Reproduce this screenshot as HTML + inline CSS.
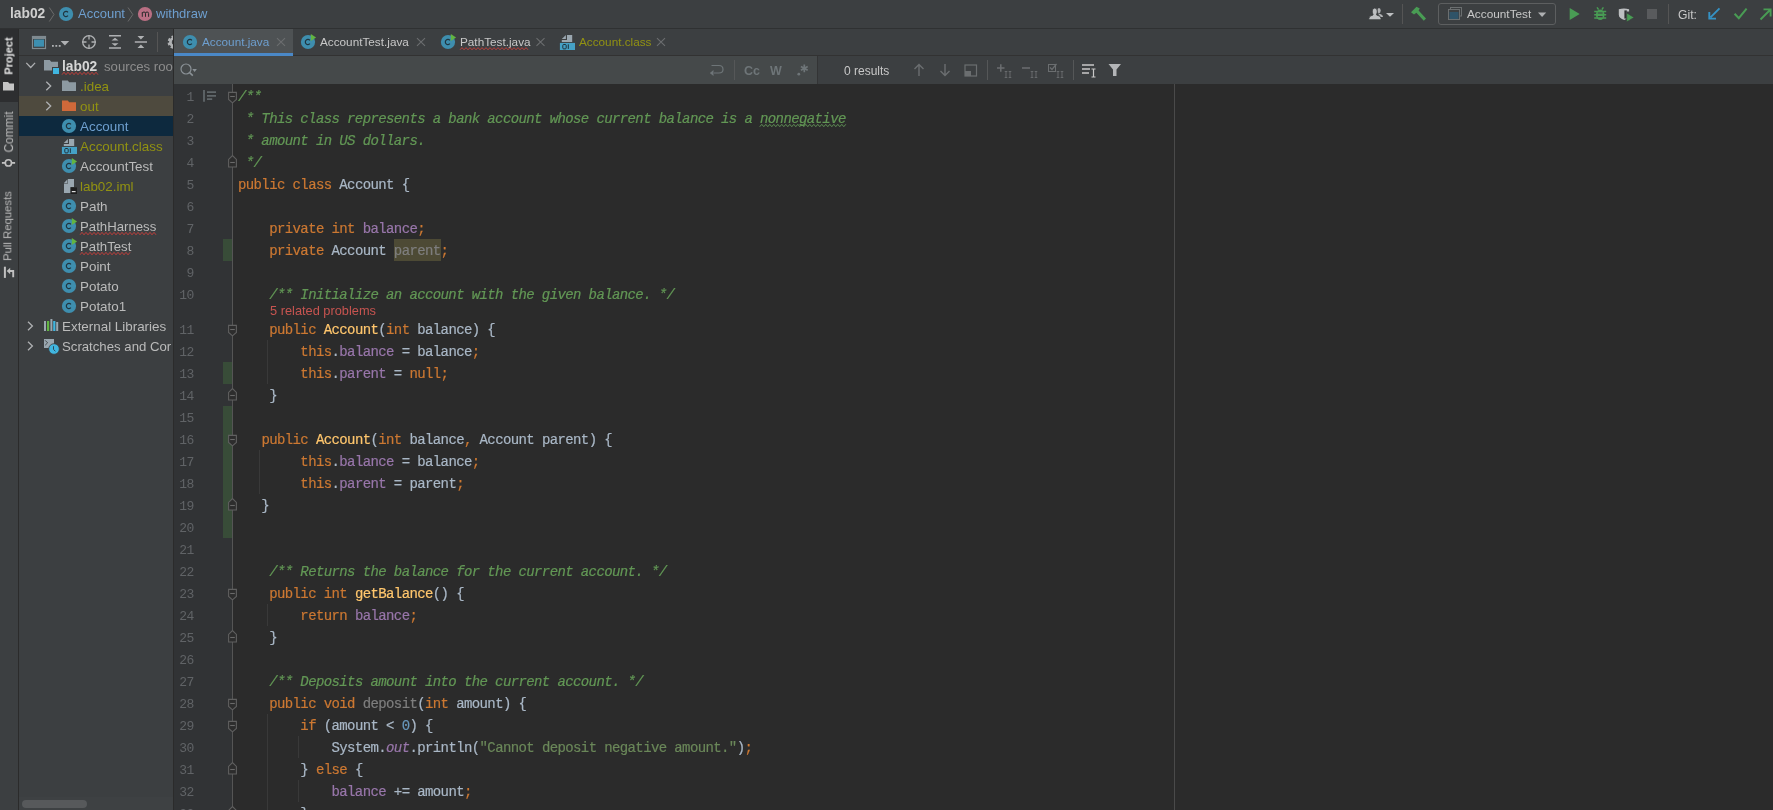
<!DOCTYPE html><html><head><meta charset="utf-8"><style>
*{margin:0;padding:0;box-sizing:border-box}
html,body{width:1773px;height:810px;overflow:hidden;background:#3c3f41;font-family:"Liberation Sans",sans-serif;color:#bbbbbb;position:relative}
.a{position:absolute}
.t{position:absolute;white-space:pre}
.cl{position:absolute;left:238px;height:22px;line-height:22px;font-family:"Liberation Mono",monospace;font-size:14px;letter-spacing:-0.61px;color:#a9b7c6;padding-top:1px;-webkit-text-stroke:0.2px;white-space:pre}
.ln{position:absolute;left:173px;width:21px;height:22px;line-height:22px;padding-top:2px;text-align:right;font-family:"Liberation Mono",monospace;font-size:13px;letter-spacing:-0.4px;color:#606366;white-space:pre}
.k{color:#cc7832}.c{color:#629755;font-style:italic}.f{color:#9876aa}.s{color:#6a8759}.n{color:#6897bb}.m{color:#ffc66d}.u{color:#7e7e7e}.fi{color:#9876aa;font-style:italic}
.tr{position:absolute;height:20px;line-height:20px;font-size:13.2px;white-space:pre;color:#bbbbbb}
.ol{color:#929212}
svg{position:absolute;overflow:visible}
.t,.tr,.cl,.ln{will-change:transform}
</style></head><body>
<div class="a" style="left:0px;top:0px;width:1773px;height:28px;background:#3c3f41;"></div>
<div class="a" style="left:0px;top:28px;width:1773px;height:1px;background:#2f3132;"></div>
<div class="a" style="left:0px;top:29px;width:19px;height:781px;background:#3c3f41;"></div>
<div class="a" style="left:0px;top:29px;width:18px;height:69px;background:#2f3132;"></div>
<div class="a" style="left:18px;top:29px;width:1px;height:781px;background:#2b2b2b;"></div>
<div class="a" style="left:19px;top:29px;width:154px;height:781px;background:#3c3f41;"></div>
<div class="a" style="left:173px;top:29px;width:1px;height:781px;background:#2b2b2b;"></div>
<div class="a" style="left:174px;top:29px;width:1599px;height:27px;background:#3c3f41;"></div>
<div class="a" style="left:174px;top:29px;width:119px;height:24px;background:#4e5254;"></div>
<div class="a" style="left:174px;top:53px;width:119px;height:3px;background:#4a88c7;"></div>
<div class="a" style="left:293px;top:55px;width:1480px;height:1px;background:#323232;"></div>
<div class="a" style="left:174px;top:56px;width:643px;height:28px;background:#45494a;"></div>
<div class="a" style="left:817px;top:56px;width:1px;height:28px;background:#333435;"></div>
<div class="a" style="left:818px;top:56px;width:955px;height:28px;background:#3c3f41;"></div>
<div class="a" style="left:174px;top:84px;width:1599px;height:726px;background:#2b2b2b;"></div>
<div class="a" style="left:174px;top:84px;width:58px;height:726px;background:#313335;"></div>
<div class="a" style="left:1174px;top:84px;width:1px;height:726px;background:#4a4a4a;"></div>
<div class="a" style="left:394px;top:239px;width:47px;height:22px;background:#4d4a35;"></div>
<div class="a" style="left:223px;top:239px;width:9px;height:22px;background:#384c38;"></div>
<div class="a" style="left:223px;top:362px;width:9px;height:22px;background:#384c38;"></div>
<div class="a" style="left:223px;top:406px;width:9px;height:132px;background:#384c38;"></div>
<div class="a" style="left:232px;top:84px;width:1px;height:726px;background:#555555;"></div>
<div class="a" style="left:267px;top:340px;width:1px;height:44px;background:#393939;"></div>
<div class="a" style="left:259px;top:450px;width:1px;height:44px;background:#393939;"></div>
<div class="a" style="left:267px;top:604px;width:1px;height:22px;background:#393939;"></div>
<div class="a" style="left:267px;top:714px;width:1px;height:110px;background:#393939;"></div>
<div class="a" style="left:298px;top:736px;width:1px;height:22px;background:#393939;"></div>
<div class="a" style="left:298px;top:780px;width:1px;height:22px;background:#393939;"></div>
<div class="ln" style="top:85px">1</div>
<div class="cl" style="top:85px"><span class="c">/**</span></div>
<div class="ln" style="top:107px">2</div>
<div class="cl" style="top:107px"><span class="c"> * This class represents a bank account whose current balance is a </span><span class="c">nonnegative</span></div>
<div class="ln" style="top:129px">3</div>
<div class="cl" style="top:129px"><span class="c"> * amount in US dollars.</span></div>
<div class="ln" style="top:151px">4</div>
<div class="cl" style="top:151px"><span class="c"> */</span></div>
<div class="ln" style="top:173px">5</div>
<div class="cl" style="top:173px"><span class="k">public </span><span class="k">class </span>Account {</div>
<div class="ln" style="top:195px">6</div>
<div class="cl" style="top:195px"></div>
<div class="ln" style="top:217px">7</div>
<div class="cl" style="top:217px">    <span class="k">private </span><span class="k">int </span><span class="f">balance</span><span class="k">;</span></div>
<div class="ln" style="top:239px">8</div>
<div class="cl" style="top:239px">    <span class="k">private </span>Account <span class="u">parent</span><span class="k">;</span></div>
<div class="ln" style="top:261px">9</div>
<div class="cl" style="top:261px"></div>
<div class="ln" style="top:283px">10</div>
<div class="cl" style="top:283px">    <span class="c">/** Initialize an account with the given balance. */</span></div>
<div class="ln" style="top:318px">11</div>
<div class="cl" style="top:318px">    <span class="k">public </span><span class="m">Account</span>(<span class="k">int </span>balance) {</div>
<div class="ln" style="top:340px">12</div>
<div class="cl" style="top:340px">        <span class="k">this</span>.<span class="f">balance</span> = balance<span class="k">;</span></div>
<div class="ln" style="top:362px">13</div>
<div class="cl" style="top:362px">        <span class="k">this</span>.<span class="f">parent</span> = <span class="k">null;</span></div>
<div class="ln" style="top:384px">14</div>
<div class="cl" style="top:384px">    }</div>
<div class="ln" style="top:406px">15</div>
<div class="cl" style="top:406px"></div>
<div class="ln" style="top:428px">16</div>
<div class="cl" style="top:428px">   <span class="k">public </span><span class="m">Account</span>(<span class="k">int </span>balance<span class="k">, </span>Account parent) {</div>
<div class="ln" style="top:450px">17</div>
<div class="cl" style="top:450px">        <span class="k">this</span>.<span class="f">balance</span> = balance<span class="k">;</span></div>
<div class="ln" style="top:472px">18</div>
<div class="cl" style="top:472px">        <span class="k">this</span>.<span class="f">parent</span> = parent<span class="k">;</span></div>
<div class="ln" style="top:494px">19</div>
<div class="cl" style="top:494px">   }</div>
<div class="ln" style="top:516px">20</div>
<div class="cl" style="top:516px"></div>
<div class="ln" style="top:538px">21</div>
<div class="cl" style="top:538px"></div>
<div class="ln" style="top:560px">22</div>
<div class="cl" style="top:560px">    <span class="c">/** Returns the balance for the current account. */</span></div>
<div class="ln" style="top:582px">23</div>
<div class="cl" style="top:582px">    <span class="k">public </span><span class="k">int </span><span class="m">getBalance</span>() {</div>
<div class="ln" style="top:604px">24</div>
<div class="cl" style="top:604px">        <span class="k">return </span><span class="f">balance</span><span class="k">;</span></div>
<div class="ln" style="top:626px">25</div>
<div class="cl" style="top:626px">    }</div>
<div class="ln" style="top:648px">26</div>
<div class="cl" style="top:648px"></div>
<div class="ln" style="top:670px">27</div>
<div class="cl" style="top:670px">    <span class="c">/** Deposits amount into the current account. */</span></div>
<div class="ln" style="top:692px">28</div>
<div class="cl" style="top:692px">    <span class="k">public </span><span class="k">void </span><span class="u">deposit</span>(<span class="k">int </span>amount) {</div>
<div class="ln" style="top:714px">29</div>
<div class="cl" style="top:714px">        <span class="k">if </span>(amount &lt; <span class="n">0</span>) {</div>
<div class="ln" style="top:736px">30</div>
<div class="cl" style="top:736px">            System.<span class="fi">out</span>.println(<span class="s">&quot;Cannot deposit negative amount.&quot;</span>)<span class="k">;</span></div>
<div class="ln" style="top:758px">31</div>
<div class="cl" style="top:758px">        } <span class="k">else </span>{</div>
<div class="ln" style="top:780px">32</div>
<div class="cl" style="top:780px">            <span class="f">balance</span> += amount<span class="k">;</span></div>
<div class="ln" style="top:802px">33</div>
<div class="cl" style="top:802px">        }</div>
<div class="t" style="left:270px;top:303px;font-size:12.8px;line-height:16px;color:#c75450">5 related problems</div>
<svg style="left:0;top:0" width="1" height="1"><path d="M228.6 92.4 H236.4 V99.4 L232.5 102.8 L228.6 99.4 Z" fill="#2d2d2d" stroke="#606060" stroke-width="1.1"/><path d="M230.2 96.5 H234.8" stroke="#6a6a6a" stroke-width="1.1"/></svg>
<svg style="left:0;top:0" width="1" height="1"><path d="M228.6 167.0 H236.4 V159.4 L232.5 155.6 L228.6 159.4 Z" fill="#2d2d2d" stroke="#606060" stroke-width="1.1"/><path d="M230.2 162.5 H234.8" stroke="#6a6a6a" stroke-width="1.1"/></svg>
<svg style="left:0;top:0" width="1" height="1"><path d="M228.6 325.4 H236.4 V332.4 L232.5 335.8 L228.6 332.4 Z" fill="#2d2d2d" stroke="#606060" stroke-width="1.1"/><path d="M230.2 329.5 H234.8" stroke="#6a6a6a" stroke-width="1.1"/></svg>
<svg style="left:0;top:0" width="1" height="1"><path d="M228.6 400.0 H236.4 V392.4 L232.5 388.6 L228.6 392.4 Z" fill="#2d2d2d" stroke="#606060" stroke-width="1.1"/><path d="M230.2 395.5 H234.8" stroke="#6a6a6a" stroke-width="1.1"/></svg>
<svg style="left:0;top:0" width="1" height="1"><path d="M228.6 435.4 H236.4 V442.4 L232.5 445.8 L228.6 442.4 Z" fill="#2d2d2d" stroke="#606060" stroke-width="1.1"/><path d="M230.2 439.5 H234.8" stroke="#6a6a6a" stroke-width="1.1"/></svg>
<svg style="left:0;top:0" width="1" height="1"><path d="M228.6 510.0 H236.4 V502.4 L232.5 498.6 L228.6 502.4 Z" fill="#2d2d2d" stroke="#606060" stroke-width="1.1"/><path d="M230.2 505.5 H234.8" stroke="#6a6a6a" stroke-width="1.1"/></svg>
<svg style="left:0;top:0" width="1" height="1"><path d="M228.6 589.4 H236.4 V596.4 L232.5 599.8 L228.6 596.4 Z" fill="#2d2d2d" stroke="#606060" stroke-width="1.1"/><path d="M230.2 593.5 H234.8" stroke="#6a6a6a" stroke-width="1.1"/></svg>
<svg style="left:0;top:0" width="1" height="1"><path d="M228.6 642.0 H236.4 V634.4 L232.5 630.6 L228.6 634.4 Z" fill="#2d2d2d" stroke="#606060" stroke-width="1.1"/><path d="M230.2 637.5 H234.8" stroke="#6a6a6a" stroke-width="1.1"/></svg>
<svg style="left:0;top:0" width="1" height="1"><path d="M228.6 699.4 H236.4 V706.4 L232.5 709.8 L228.6 706.4 Z" fill="#2d2d2d" stroke="#606060" stroke-width="1.1"/><path d="M230.2 703.5 H234.8" stroke="#6a6a6a" stroke-width="1.1"/></svg>
<svg style="left:0;top:0" width="1" height="1"><path d="M228.6 721.4 H236.4 V728.4 L232.5 731.8 L228.6 728.4 Z" fill="#2d2d2d" stroke="#606060" stroke-width="1.1"/><path d="M230.2 725.5 H234.8" stroke="#6a6a6a" stroke-width="1.1"/></svg>
<svg style="left:0;top:0" width="1" height="1"><path d="M228.6 774.0 H236.4 V766.4 L232.5 762.6 L228.6 766.4 Z" fill="#2d2d2d" stroke="#606060" stroke-width="1.1"/><path d="M230.2 769.5 H234.8" stroke="#6a6a6a" stroke-width="1.1"/></svg>
<svg style="left:0;top:0" width="1" height="1"><path d="M228.6 818.0 H236.4 V810.4 L232.5 806.6 L228.6 810.4 Z" fill="#2d2d2d" stroke="#606060" stroke-width="1.1"/><path d="M230.2 813.5 H234.8" stroke="#6a6a6a" stroke-width="1.1"/></svg>
<svg style="left:0;top:0" width="1" height="1"><path d="M204 90 V101.8 M207 92.1 H216 M207 95.9 H216 M207 99.1 H212.2" stroke="#60676a" stroke-width="1.8" fill="none"/></svg>
<div class="a" style="left:0px;top:29px;width:18px;height:73px;background:#2d2e30;"></div>
<div class="t" style="left:8.6px;top:56.3px;font-size:11px;line-height:11px;color:#e6e6e6;font-weight:bold;transform:translate(-50%,-50%) rotate(-90deg)">Project</div>
<div class="t" style="left:9.8px;top:132px;font-size:11.9px;line-height:11.9px;color:#bbbbbb;font-weight:normal;transform:translate(-50%,-50%) rotate(-90deg)">Commit</div>
<div class="t" style="left:8.3px;top:225.8px;font-size:11.3px;line-height:11.3px;color:#bbbbbb;font-weight:normal;transform:translate(-50%,-50%) rotate(-90deg)">Pull Requests</div>
<svg style="left:0;top:0" width="1" height="1"><path d="M3 82 H8 L9.5 83.5 H14 V90.5 H3 Z" fill="#c5c5c5"/></svg>
<svg style="left:0;top:0" width="1" height="1"><path d="M1.9 162.9 H15.1" stroke="#c0c0c0" stroke-width="1.8"/><circle cx="8.4" cy="162.9" r="3.1" fill="#3c3f41" stroke="#c0c0c0" stroke-width="1.6"/></svg>
<svg style="left:0;top:0" width="1" height="1"><path d="M4.9 266.7 V277.9" stroke="#c0c0c0" stroke-width="2"/><path d="M6.7 271 L10.2 267.8 V274.2 Z" fill="#c0c0c0"/><path d="M9.5 271 H13.2 V277.2" fill="none" stroke="#c0c0c0" stroke-width="1.9"/></svg>
<div class="t" style="left:9.6px;top:6.11px;font-size:13.8px;line-height:15.86px;color:#cfcfcf;font-weight:bold;">lab02</div>
<svg style="left:0;top:0" width="1" height="1"><path d="M49.3 7.5 L54 14.5 L49.3 21.5" fill="none" stroke="#6b6b6b" stroke-width="1"/></svg>
<svg style="left:0;top:0" width="1" height="1"><circle cx="66.1" cy="14" r="7.1" fill="#3e8eae"/><path d="M68 12.3 A2.6 2.6 0 1 0 68 15.7" fill="none" stroke="#1f3540" stroke-width="1.2"/></svg>
<div class="t" style="left:77.5px;top:6.63px;font-size:13px;line-height:14.94px;color:#6e9fcf;font-weight:normal;">Account</div>
<svg style="left:0;top:0" width="1" height="1"><path d="M128 7.5 L132.8 14.5 L128 21.5" fill="none" stroke="#6b6b6b" stroke-width="1"/></svg>
<svg style="left:0;top:0" width="1" height="1"><circle cx="145" cy="14" r="7.1" fill="#b96f83"/><path d="M142.3 16.8 V12.2 M142.3 13.2 Q142.6 12 144 12 Q145.5 12 145.5 13.4 V16.8 M145.5 13.4 Q145.6 12 147.1 12 Q148.6 12 148.6 13.4 V16.8" fill="none" stroke="#2a2a2a" stroke-width="1"/></svg>
<div class="t" style="left:156.3px;top:6.63px;font-size:13px;line-height:14.94px;color:#6e9fcf;font-weight:normal;">withdraw</div>
<svg style="left:0;top:0" width="1" height="1"><ellipse cx="1379" cy="10.6" rx="1.7" ry="2.6" fill="#b0b2b4"/><path d="M1378 13.6 Q1383 14.4 1383 16.9 H1380.5 Z" fill="#b0b2b4"/><path d="M1368.9 19.8 V18.2 Q1369.3 15.6 1373 15 V14.2 Q1372.2 13.3 1372.2 11 Q1372.4 8 1374.8 8 Q1377.2 8 1377.3 11 Q1377.3 13.3 1376.6 14.2 V15 Q1380.6 15.6 1381 18.2 V19.8 Z" fill="#bdbfc1" stroke="#3c3f41" stroke-width="0.9"/><path d="M1386 12.9 H1394 L1390 16.8 Z" fill="#bdbfc1"/></svg>
<div class="a" style="left:1402px;top:4px;width:1px;height:20px;background:#555555;"></div>
<svg style="left:0;top:0" width="1" height="1"><path d="M1411 12.2 L1416.5 6.8 L1419.8 8.6 L1418.6 10.5 L1426 18.6 L1423.8 20.8 L1416.4 12.8 L1414 14.6 Z" fill="#499c54"/></svg>
<div class="a" style="left:1438px;top:3px;width:118px;height:22px;border:1px solid #5d5f60;border-radius:3px"></div>
<svg style="left:0;top:0" width="1" height="1"><rect x="1450.5" y="7.5" width="11" height="8.5" fill="none" stroke="#6b6f70" stroke-width="1"/><rect x="1448.5" y="9.5" width="11" height="10" fill="#3c3f41" stroke="#6b6f70" stroke-width="1"/><rect x="1449.5" y="12" width="9" height="7" fill="#2f5368"/></svg>
<div class="t" style="left:1467.2px;top:8.12px;font-size:11.8px;line-height:13.56px;color:#c8c8c8;font-weight:normal;">AccountTest</div>
<svg style="left:0;top:0" width="1" height="1"><path d="M1538 12.4 H1546.2 L1542.1 17 Z" fill="#aeb0b2"/></svg>
<svg style="left:0;top:0" width="1" height="1"><path d="M1569.7 8 L1579.7 14 L1569.7 20 Z" fill="#499c54"/></svg>
<svg style="left:0;top:0" width="1" height="1"><ellipse cx="1600.2" cy="14.8" rx="4.3" ry="5.2" fill="#499c54"/><path d="M1594.2 11.5 H1606.2 M1594.2 14.8 H1606.2 M1594.2 18.1 H1606.2 M1597 7.4 L1598.6 9.6 M1603.4 7.4 L1601.8 9.6" stroke="#499c54" stroke-width="1.5"/><path d="M1597.8 13 H1602.6 M1597.8 16.6 H1602.6" stroke="#3c3f41" stroke-width="1.1"/></svg>
<svg style="left:0;top:0" width="1" height="1"><path d="M1618.8 9.2 Q1624 7.6 1629.1 9.2 V11.6 H1626.8 V18.6 Q1625.8 19.6 1624.3 20 Q1618.8 18.4 1618.8 14.8 Z" fill="#bdbfc1"/><rect x="1624.4" y="10.4" width="2.4" height="8.2" fill="#2f3133"/><path d="M1626.7 12.9 L1634.1 17.45 L1626.7 22 Z" fill="#499c54" stroke="#3c3f41" stroke-width="0.7"/></svg>
<div class="a" style="left:1647px;top:9px;width:10px;height:10px;background:#595b5d;"></div>
<div class="a" style="left:1668px;top:4px;width:1px;height:20px;background:#555555;"></div>
<div class="t" style="left:1678.2px;top:7.96px;font-size:12.2px;line-height:14.02px;color:#c8c8c8;font-weight:normal;">Git:</div>
<svg style="left:0;top:0" width="1" height="1"><path d="M1719.5 8.3 L1710.5 17.3 M1709.3 12 V18.6 H1716" fill="none" stroke="#3592c4" stroke-width="1.9"/></svg>
<svg style="left:0;top:0" width="1" height="1"><path d="M1734.6 13.8 L1738.8 18.2 L1746.6 8.6" fill="none" stroke="#499c54" stroke-width="2"/></svg>
<svg style="left:0;top:0" width="1" height="1"><path d="M1760.5 19.5 L1770 10 M1763.5 9.4 H1770.6 V16.5" fill="none" stroke="#499c54" stroke-width="1.9"/></svg>
<svg style="left:0;top:0" width="1" height="1"><rect x="32.5" y="36.5" width="13" height="12" fill="none" stroke="#7f8a90" stroke-width="1.2"/><rect x="32" y="36" width="14" height="3" fill="#7f8a90"/><rect x="34" y="39.5" width="10" height="7.2" fill="#3d8fb0"/></svg>
<svg style="left:0;top:0" width="1" height="1"><rect x="52" y="45" width="1.8" height="1.8" fill="#afb1b3"/><rect x="55.4" y="45" width="1.8" height="1.8" fill="#afb1b3"/><rect x="58.8" y="45" width="1.8" height="1.8" fill="#afb1b3"/><path d="M60.6 41 H69.2 L64.9 45.6 Z" fill="#afb1b3"/></svg>
<svg style="left:0;top:0" width="1" height="1"><circle cx="89" cy="42" r="6.3" fill="none" stroke="#afb1b3" stroke-width="1.3"/><path d="M89 35 V39.5 M89 44.5 V49 M82 42 H86.5 M91.5 42 H96" stroke="#afb1b3" stroke-width="1.3"/></svg>
<svg style="left:0;top:0" width="1" height="1"><path d="M109 35.7 H121 M109 48 H121" stroke="#afb1b3" stroke-width="1.5"/><path d="M111.5 40.5 H118.5 L115 37.8 Z M111.5 43.2 H118.5 L115 46 Z" fill="#afb1b3"/></svg>
<svg style="left:0;top:0" width="1" height="1"><path d="M134.8 42 H147" stroke="#afb1b3" stroke-width="1.5"/><path d="M137.5 36 H144.3 L140.9 39.6 Z M137.5 48 H144.3 L140.9 44.4 Z" fill="#afb1b3"/></svg>
<div class="a" style="left:157px;top:32px;width:1px;height:20px;background:#555555;"></div>
<div class="a" style="left:160px;top:30px;width:13px;height:24px;overflow:hidden"><svg style="left:-160px;top:-30px" width="1" height="1"><circle cx="174.4" cy="42.2" r="4.0" fill="none" stroke="#afb1b3" stroke-width="2.8"/><circle cx="174.4" cy="42.2" r="5.6" fill="none" stroke="#afb1b3" stroke-width="2.4" stroke-dasharray="2.6 1.8" stroke-dashoffset="-0.9"/></svg></div>
<div class="a" style="left:19px;top:96px;width:154px;height:20px;background:#4e4a3e;"></div>
<div class="a" style="left:19px;top:116px;width:154px;height:20px;background:#0d293e;"></div>
<svg style="left:0;top:0" width="1" height="1"><path d="M26.3 62.9 L30.700000000000003 67.5 L35.1 62.9" fill="none" stroke="#aeb0b2" stroke-width="1.3"/></svg>
<svg style="left:0;top:0" width="1" height="1"><path d="M44 60.0 H49.8 L51.2 61.7 H58 V70.5 H44 Z" fill="#8d9aa2"/></svg>
<div class="a" style="left:53px;top:68px;width:6px;height:6px;background:#40b6e0;"></div>
<svg style="left:0;top:0" width="1" height="1"><rect x="52.5" y="67.5" width="7" height="7" fill="none" stroke="#3c3f41" stroke-width="1"/></svg>
<div class="tr" style="left:62.2px;top:56.5px;color:#d6d6d6;font-weight:bold;font-size:13.8px;">lab02</div>
<div class="tr" style="left:104.4px;top:56.5px;color:#8c8c8c;font-weight:normal;font-size:13.2px;width:69px;overflow:hidden">sources roo</div>
<svg style="left:0;top:0" width="1" height="1"><path d="M46.3 81.7 L50.699999999999996 86 L46.3 90.3" fill="none" stroke="#aeb0b2" stroke-width="1.3"/></svg>
<svg style="left:0;top:0" width="1" height="1"><path d="M62 80.5 H67.8 L69.2 82.2 H76 V91 H62 Z" fill="#8d9aa2"/></svg>
<div class="tr" style="left:80.2px;top:76.5px;color:#929212;font-weight:normal;font-size:13.4px;">.idea</div>
<svg style="left:0;top:0" width="1" height="1"><path d="M46.3 101.7 L50.699999999999996 106 L46.3 110.3" fill="none" stroke="#aeb0b2" stroke-width="1.3"/></svg>
<svg style="left:0;top:0" width="1" height="1"><path d="M62 100.5 H67.8 L69.2 102.2 H76 V111 H62 Z" fill="#d0693a"/></svg>
<div class="tr" style="left:80.2px;top:96.5px;color:#929212;font-weight:normal;font-size:13.4px;">out</div>
<svg style="left:0;top:0" width="1" height="1"><circle cx="69" cy="126" r="7.1" fill="#3e8eae"/><path d="M70.9 124.3 A2.6 2.6 0 1 0 70.9 127.7" fill="none" stroke="#1f3540" stroke-width="1.2"/></svg>
<div class="tr" style="left:80.2px;top:116.5px;color:#6e9fcf;font-weight:normal;font-size:13.4px;">Account</div>
<svg style="left:0;top:0" width="1" height="1"><path d="M63.8 142.9 L67.9 139.0 V142.9 Z" fill="#9aa7b0"/><path d="M69.0 139.0 H74.2 V146.0 H63.8 V144.0 H69.0 Z" fill="#9aa7b0"/><rect x="61.9" y="146.9" width="15.1" height="7.1" fill="#45a1c6"/><path d="M65.7 148.5 h1.6 q0.9 0 0.9 1 v2.4 q0 1 -0.9 1 h-1.6 q-0.9 0 -0.9 -1 v-2.4 q0 -1 0.9 -1 Z M70.3 148.3 V152.9" fill="none" stroke="#1d2a33" stroke-width="0.95"/></svg>
<div class="tr" style="left:80.2px;top:136.5px;color:#929212;font-weight:normal;font-size:13.4px;">Account.class</div>
<svg style="left:0;top:0" width="1" height="1"><circle cx="69" cy="166" r="7.1" fill="#3e8eae"/><path d="M70.9 164.3 A2.6 2.6 0 1 0 70.9 167.7" fill="none" stroke="#1f3540" stroke-width="1.2"/><path d="M71.8 157.9 L77.1 161.4 L71.8 165 Z" fill="#62b543"/></svg>
<div class="tr" style="left:80.2px;top:156.5px;color:#bbbbbb;font-weight:normal;font-size:13.4px;">AccountTest</div>
<svg style="left:0;top:0" width="1" height="1"><path d="M64 183 L67.5 179.2 V183 Z" fill="#9aa7b0"/><path d="M68 179 H74 V187 H70.5 V193 H64 V183.5 H68 Z" fill="#9aa7b0"/><rect x="70.6" y="187.4" width="6.4" height="6.6" fill="#1e1e1e"/><rect x="71.8" y="191" width="3.8" height="1.2" fill="#dddddd"/></svg>
<div class="tr" style="left:80.2px;top:176.5px;color:#929212;font-weight:normal;font-size:13.4px;">lab02.iml</div>
<svg style="left:0;top:0" width="1" height="1"><circle cx="69" cy="206" r="7.1" fill="#3e8eae"/><path d="M70.9 204.3 A2.6 2.6 0 1 0 70.9 207.7" fill="none" stroke="#1f3540" stroke-width="1.2"/></svg>
<div class="tr" style="left:80.2px;top:196.5px;color:#bbbbbb;font-weight:normal;font-size:13.4px;">Path</div>
<svg style="left:0;top:0" width="1" height="1"><circle cx="69" cy="226" r="7.1" fill="#3e8eae"/><path d="M70.9 224.3 A2.6 2.6 0 1 0 70.9 227.7" fill="none" stroke="#1f3540" stroke-width="1.2"/><path d="M71.8 217.9 L77.1 221.4 L71.8 225 Z" fill="#62b543"/></svg>
<div class="tr" style="left:80.2px;top:216.5px;color:#bbbbbb;font-weight:normal;font-size:13.2px;">PathHarness</div>
<svg style="left:0;top:0" width="1" height="1"><circle cx="69" cy="246" r="7.1" fill="#3e8eae"/><path d="M70.9 244.3 A2.6 2.6 0 1 0 70.9 247.7" fill="none" stroke="#1f3540" stroke-width="1.2"/><path d="M71.8 237.9 L77.1 241.4 L71.8 245 Z" fill="#62b543"/></svg>
<div class="tr" style="left:80.2px;top:236.5px;color:#bbbbbb;font-weight:normal;font-size:13.2px;">PathTest</div>
<svg style="left:0;top:0" width="1" height="1"><circle cx="69" cy="266" r="7.1" fill="#3e8eae"/><path d="M70.9 264.3 A2.6 2.6 0 1 0 70.9 267.7" fill="none" stroke="#1f3540" stroke-width="1.2"/></svg>
<div class="tr" style="left:80.2px;top:256.5px;color:#bbbbbb;font-weight:normal;font-size:13.4px;">Point</div>
<svg style="left:0;top:0" width="1" height="1"><circle cx="69" cy="286" r="7.1" fill="#3e8eae"/><path d="M70.9 284.3 A2.6 2.6 0 1 0 70.9 287.7" fill="none" stroke="#1f3540" stroke-width="1.2"/></svg>
<div class="tr" style="left:80.2px;top:276.5px;color:#bbbbbb;font-weight:normal;font-size:13.4px;">Potato</div>
<svg style="left:0;top:0" width="1" height="1"><circle cx="69" cy="306" r="7.1" fill="#3e8eae"/><path d="M70.9 304.3 A2.6 2.6 0 1 0 70.9 307.7" fill="none" stroke="#1f3540" stroke-width="1.2"/></svg>
<div class="tr" style="left:80.2px;top:296.5px;color:#bbbbbb;font-weight:normal;font-size:13.4px;">Potato1</div>
<svg style="left:0;top:0" width="1" height="1"><path d="M28 321.7 L32.4 326 L28 330.3" fill="none" stroke="#aeb0b2" stroke-width="1.3"/></svg>
<svg style="left:0;top:0" width="1" height="1"><rect x="44" y="321" width="2" height="10" fill="#9aa7b0"/><rect x="47" y="321" width="2.2" height="10" fill="#62b543"/><rect x="50.4" y="319" width="2" height="12" fill="#9aa7b0"/><rect x="53.2" y="321" width="2.2" height="10" fill="#40b6e0"/><rect x="56.2" y="322" width="2" height="9" fill="#9aa7b0"/></svg>
<div class="tr" style="left:62.2px;top:316.5px;color:#bbbbbb;font-weight:normal;font-size:13.4px;">External Libraries</div>
<svg style="left:0;top:0" width="1" height="1"><path d="M28 341.7 L32.4 346 L28 350.3" fill="none" stroke="#aeb0b2" stroke-width="1.3"/></svg>
<svg style="left:0;top:0" width="1" height="1"><rect x="44" y="339" width="10" height="9" fill="#9aa7b0"/><path d="M45.2 340.4 L47.6 342.8 L45.2 345.2" fill="none" stroke="#3c3f41" stroke-width="0.9"/><circle cx="54" cy="349" r="5.3" fill="#40b6e0" stroke="#3c3f41" stroke-width="0.8"/><path d="M53.5 346.2 V349.5 L55.4 351.2" fill="none" stroke="#2b4a5a" stroke-width="1"/></svg>
<div class="tr" style="left:62.2px;top:336.5px;width:110.8px;overflow:hidden">Scratches and Cor</div>
<div class="a" style="left:19px;top:797px;width:154px;height:13px;background:#3e4143;"></div>
<div class="a" style="left:22px;top:799.5px;width:65px;height:8.5px;background:#57595b;border-radius:4px"></div>
<svg style="left:0;top:0" width="1" height="1"><circle cx="190" cy="42" r="7.1" fill="#3e8eae"/><path d="M191.9 40.3 A2.6 2.6 0 1 0 191.9 43.7" fill="none" stroke="#1f3540" stroke-width="1.2"/></svg>
<div class="t" style="left:202px;top:35.27px;font-size:11.75px;line-height:13.50px;color:#6e9fcf;font-weight:normal;">Account.java</div>
<svg style="left:0;top:0" width="1" height="1"><path d="M277 38.2 L285 45.800000000000004 M285 38.2 L277 45.800000000000004" stroke="#6c6e70" stroke-width="1.1"/></svg>
<svg style="left:0;top:0" width="1" height="1"><circle cx="308" cy="42" r="7.1" fill="#3e8eae"/><path d="M309.9 40.3 A2.6 2.6 0 1 0 309.9 43.7" fill="none" stroke="#1f3540" stroke-width="1.2"/><path d="M310.8 33.9 L316.1 37.4 L310.8 41 Z" fill="#62b543"/></svg>
<div class="t" style="left:320.3px;top:35.27px;font-size:11.75px;line-height:13.50px;color:#c8c8c8;font-weight:normal;">AccountTest.java</div>
<svg style="left:0;top:0" width="1" height="1"><path d="M417 38.2 L425 45.800000000000004 M425 38.2 L417 45.800000000000004" stroke="#6c6e70" stroke-width="1.1"/></svg>
<svg style="left:0;top:0" width="1" height="1"><circle cx="448" cy="42" r="7.1" fill="#3e8eae"/><path d="M449.9 40.3 A2.6 2.6 0 1 0 449.9 43.7" fill="none" stroke="#1f3540" stroke-width="1.2"/><path d="M450.8 33.9 L456.1 37.4 L450.8 41 Z" fill="#62b543"/></svg>
<div class="t" style="left:460px;top:35.27px;font-size:11.75px;line-height:13.50px;color:#c8c8c8;font-weight:normal;">PathTest.java</div>
<svg style="left:0;top:0" width="1" height="1"><path d="M536.5 38.2 L544.5 45.800000000000004 M544.5 38.2 L536.5 45.800000000000004" stroke="#6c6e70" stroke-width="1.1"/></svg>
<svg style="left:0;top:0" width="1" height="1"><path d="M561.8 38.9 L565.9 35.0 V38.9 Z" fill="#9aa7b0"/><path d="M567.0 35.0 H572.1999999999999 V42.0 H561.8 V40.0 H567.0 Z" fill="#9aa7b0"/><rect x="559.9" y="42.9" width="15.1" height="7.1" fill="#45a1c6"/><path d="M563.6999999999999 44.5 h1.6 q0.9 0 0.9 1 v2.4 q0 1 -0.9 1 h-1.6 q-0.9 0 -0.9 -1 v-2.4 q0 -1 0.9 -1 Z M568.3 44.3 V48.9" fill="none" stroke="#1d2a33" stroke-width="0.95"/></svg>
<div class="t" style="left:579px;top:35.27px;font-size:11.75px;line-height:13.50px;color:#929212;font-weight:normal;">Account.class</div>
<svg style="left:0;top:0" width="1" height="1"><path d="M657 38.2 L665 45.800000000000004 M665 38.2 L657 45.800000000000004" stroke="#6c6e70" stroke-width="1.1"/></svg>
<svg style="left:0;top:0" width="1" height="1"><circle cx="186" cy="69" r="5" fill="none" stroke="#8a9196" stroke-width="1.2"/><path d="M189.6 72.6 L192.8 75.6" stroke="#8a9196" stroke-width="1.6"/><path d="M192.3 68.9 H196.9 L194.6 72 Z" fill="#8a9196"/></svg>
<svg style="left:0;top:0" width="1" height="1"><path d="M711.5 65.5 H719 Q723 65.5 723 69.5 Q723 73 719 73 H714" fill="none" stroke="#6e7578" stroke-width="1.2"/><path d="M713.5 70 L713.5 76 L709.8 73 Z" fill="#6e7578"/></svg>
<div class="a" style="left:734px;top:60px;width:1px;height:20px;background:#555758;"></div>
<div class="t" style="left:744px;top:64.19px;font-size:12.5px;line-height:14.36px;color:#6e7578;font-weight:bold;">Cc</div>
<div class="t" style="left:770.2px;top:64.19px;font-size:12.5px;line-height:14.36px;color:#6e7578;font-weight:bold;">W</div>
<svg style="left:0;top:0" width="1" height="1"><circle cx="798.8" cy="74.2" r="1.4" fill="#6e7578"/><path d="M804.3 64.5 V72.3 M800.9 66.5 L807.7 70.3 M800.9 70.3 L807.7 66.5" stroke="#6e7578" stroke-width="1.7"/></svg>
<div class="t" style="left:844px;top:65.14px;font-size:12px;line-height:13.79px;color:#c8c8c8;font-weight:normal;">0 results</div>
<svg style="left:0;top:0" width="1" height="1"><path d="M919 64.5 V76 M914.5 69 L919 64.5 L923.5 69" fill="none" stroke="#6b6e70" stroke-width="1.4"/></svg>
<svg style="left:0;top:0" width="1" height="1"><path d="M945 64 V75.5 M940.5 71 L945 75.5 L949.5 71" fill="none" stroke="#6b6e70" stroke-width="1.4"/></svg>
<svg style="left:0;top:0" width="1" height="1"><rect x="965" y="65" width="11.5" height="11" fill="none" stroke="#6b6e70" stroke-width="1.2"/><rect x="965" y="71" width="6" height="5" fill="#6b6e70"/></svg>
<div class="a" style="left:987px;top:60px;width:1px;height:20px;background:#555758;"></div>
<svg style="left:0;top:0" width="1" height="1"><path d="M997 68 H1004.5 M1000.8 64.3 V71.8" stroke="#6b6e70" stroke-width="1.5"/><path d="M1004.7 71.5 H1007.3 M1004.7 77.5 H1007.3 M1006 71.5 V77.5 M1008.7 71.5 H1011.3 M1008.7 77.5 H1011.3 M1010 71.5 V77.5" stroke="#6b6e70" stroke-width="0.9"/></svg>
<svg style="left:0;top:0" width="1" height="1"><path d="M1022 68 H1030" stroke="#6b6e70" stroke-width="1.5"/><path d="M1030.7 71.5 H1033.3 M1030.7 77.5 H1033.3 M1032 71.5 V77.5 M1034.7 71.5 H1037.3 M1034.7 77.5 H1037.3 M1036 71.5 V77.5" stroke="#6b6e70" stroke-width="0.9"/></svg>
<svg style="left:0;top:0" width="1" height="1"><rect x="1048.5" y="64.5" width="7" height="7" fill="none" stroke="#6b6e70" stroke-width="1"/><path d="M1050 67.5 L1052 69.5 L1056.5 64" fill="none" stroke="#6b6e70" stroke-width="1.2"/><path d="M1056.7 71.5 H1059.3 M1056.7 77.5 H1059.3 M1058 71.5 V77.5 M1060.7 71.5 H1063.3 M1060.7 77.5 H1063.3 M1062 71.5 V77.5" stroke="#6b6e70" stroke-width="0.9"/></svg>
<div class="a" style="left:1073px;top:60px;width:1px;height:20px;background:#555758;"></div>
<svg style="left:0;top:0" width="1" height="1"><path d="M1082 65 H1094 M1082 69 H1090 M1082 73 H1089" stroke="#c8c8c8" stroke-width="1.4"/><path d="M1093.5 69 V77 M1091.5 69 H1095.5 M1091.5 77 H1095.5" stroke="#c8c8c8" stroke-width="1.2"/></svg>
<svg style="left:0;top:0" width="1" height="1"><path d="M1108.5 64 H1121 L1116.5 69.5 V76 H1113 V69.5 Z" fill="#b3b5b7"/></svg>
<svg style="left:0;top:0" width="1" height="1"><polyline points="80.00 234.80 82.00 232.30 84.00 234.80 86.00 232.30 88.00 234.80 90.00 232.30 92.00 234.80 94.00 232.30 96.00 234.80 98.00 232.30 100.00 234.80 102.00 232.30 104.00 234.80 106.00 232.30 108.00 234.80 110.00 232.30 112.00 234.80 114.00 232.30 116.00 234.80 118.00 232.30 120.00 234.80 122.00 232.30 124.00 234.80 126.00 232.30 128.00 234.80 130.00 232.30 132.00 234.80 134.00 232.30 136.00 234.80 138.00 232.30 140.00 234.80 142.00 232.30 144.00 234.80 146.00 232.30 148.00 234.80 150.00 232.30 152.00 234.80 154.00 232.30 156.00 234.80" fill="none" stroke="#bc3f3c" stroke-width="1.0"/></svg>
<svg style="left:0;top:0" width="1" height="1"><polyline points="80.00 254.80 82.00 252.30 84.00 254.80 86.00 252.30 88.00 254.80 90.00 252.30 92.00 254.80 94.00 252.30 96.00 254.80 98.00 252.30 100.00 254.80 102.00 252.30 104.00 254.80 106.00 252.30 108.00 254.80 110.00 252.30 112.00 254.80 114.00 252.30 116.00 254.80 118.00 252.30 120.00 254.80 122.00 252.30 124.00 254.80 126.00 252.30 128.00 254.80 130.00 252.30" fill="none" stroke="#bc3f3c" stroke-width="1.0"/></svg>
<svg style="left:0;top:0" width="1" height="1"><polyline points="62.00 74.70 64.00 72.20 66.00 74.70 68.00 72.20 70.00 74.70 72.00 72.20 74.00 74.70 76.00 72.20 78.00 74.70 80.00 72.20 82.00 74.70 84.00 72.20 86.00 74.70 88.00 72.20 90.00 74.70 92.00 72.20 94.00 74.70 96.00 72.20 98.00 74.70" fill="none" stroke="#bc3f3c" stroke-width="1.0"/></svg>
<svg style="left:0;top:0" width="1" height="1"><polyline points="460.00 49.80 462.00 47.60 464.00 49.80 466.00 47.60 468.00 49.80 470.00 47.60 472.00 49.80 474.00 47.60 476.00 49.80 478.00 47.60 480.00 49.80 482.00 47.60 484.00 49.80 486.00 47.60 488.00 49.80 490.00 47.60 492.00 49.80 494.00 47.60 496.00 49.80 498.00 47.60 500.00 49.80 502.00 47.60 504.00 49.80 506.00 47.60 508.00 49.80 510.00 47.60 512.00 49.80 514.00 47.60 516.00 49.80 518.00 47.60 520.00 49.80 522.00 47.60 524.00 49.80 526.00 47.60 528.00 49.80" fill="none" stroke="#bc3f3c" stroke-width="1.0"/></svg>
<svg style="left:0;top:0" width="1" height="1"><polyline points="759.80 126.70 761.80 124.30 763.80 126.70 765.80 124.30 767.80 126.70 769.80 124.30 771.80 126.70 773.80 124.30 775.80 126.70 777.80 124.30 779.80 126.70 781.80 124.30 783.80 126.70 785.80 124.30 787.80 126.70 789.80 124.30 791.80 126.70 793.80 124.30 795.80 126.70 797.80 124.30 799.80 126.70 801.80 124.30 803.80 126.70 805.80 124.30 807.80 126.70 809.80 124.30 811.80 126.70 813.80 124.30 815.80 126.70 817.80 124.30 819.80 126.70 821.80 124.30 823.80 126.70 825.80 124.30 827.80 126.70 829.80 124.30 831.80 126.70 833.80 124.30 835.80 126.70 837.80 124.30 839.80 126.70 841.80 124.30 843.80 126.70 845.80 124.30" fill="none" stroke="#5f8f55" stroke-width="1.0"/></svg>
<div class="a" style="left:19px;top:55px;width:154px;height:1px;background:#323232;"></div>
</body></html>
